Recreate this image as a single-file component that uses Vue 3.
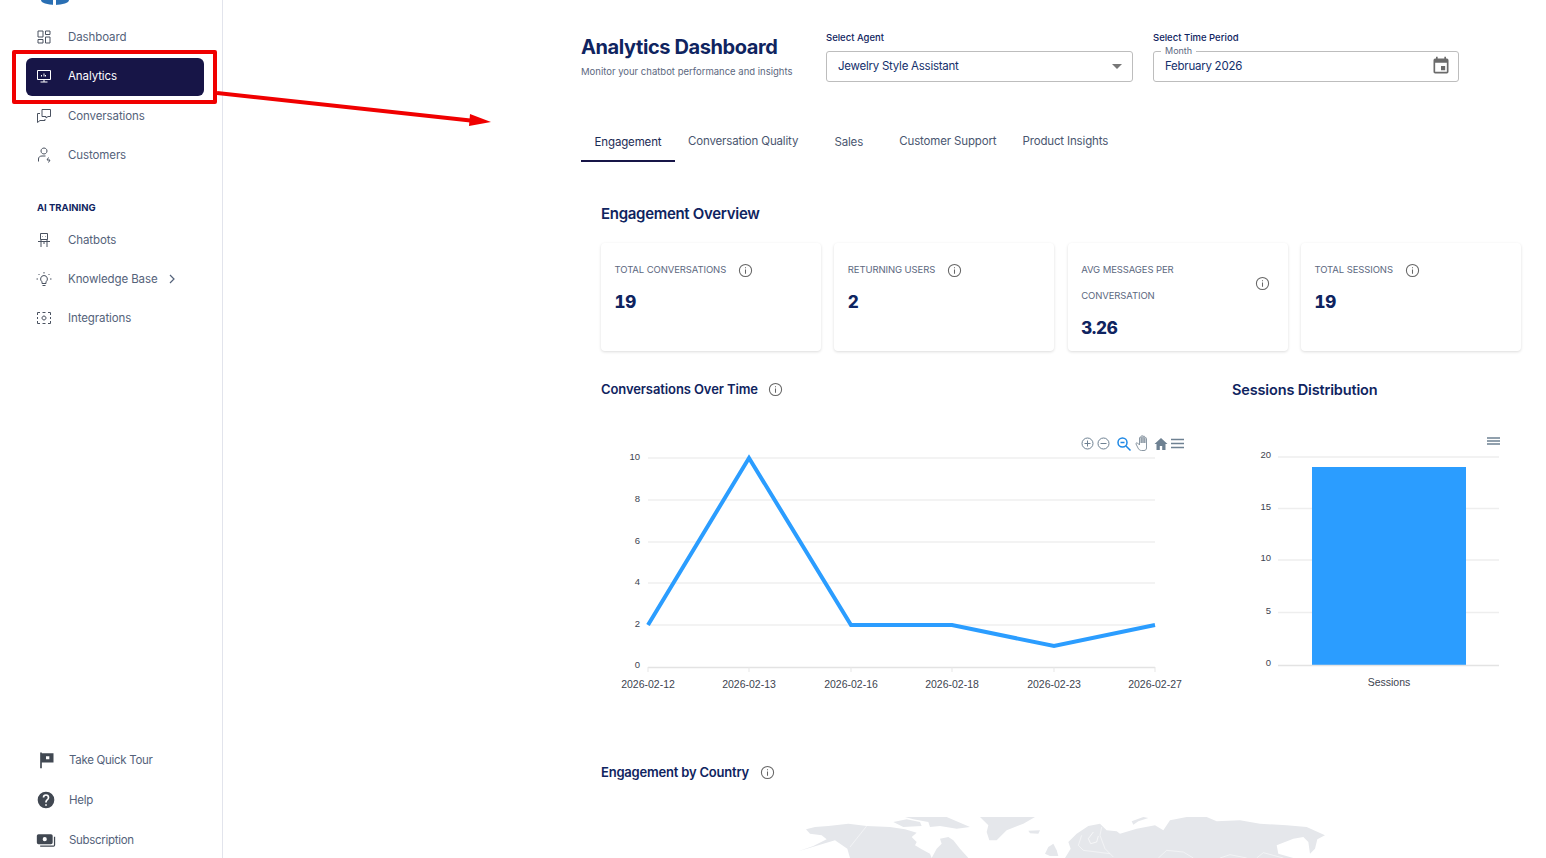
<template>
  <div class="page">
    <aside class="sidebar">
      <div class="logo"></div>
      <nav class="nav">
        <a v-for="item in mainNav" :key="item.label" class="nav-item" :class="{ active: item.active }">
          <svg class="nav-icon" viewBox="0 0 16 16" fill="none" stroke="currentColor" stroke-width="1"><path v-for="(d, i) in item.icon" :key="i" :d="d" /></svg>
          <span>{{ item.label }}</span>
        </a>
      </nav>
      <div class="nav-heading">AI TRAINING</div>
      <nav class="nav">
        <a v-for="item in trainingNav" :key="item.label" class="nav-item">
          <svg class="nav-icon" viewBox="0 0 16 16" fill="none" stroke="currentColor" stroke-width="1"><path v-for="(d, i) in item.icon" :key="i" :d="d" /></svg>
          <span>{{ item.label }}</span>
          <svg v-if="item.more" class="chev" viewBox="0 0 8 10" fill="none" stroke="currentColor" stroke-width="1.2"><path d="M2 1l4 4-4 4" /></svg>
        </a>
      </nav>
      <div class="bottom-nav">
        <a class="bottom-item">
          <svg class="bottom-icon" viewBox="0 0 24 24" fill="#414852"><path fill-rule="evenodd" d="M5 3h2v1h14v11H7v7H5zM12 7.500v3.500h4V7.500z" /></svg>
          <span>Take Quick Tour</span>
        </a>
        <a class="bottom-item">
          <svg class="bottom-icon" viewBox="0 0 24 24" fill="#414852"><path fill-rule="evenodd" d="M12 2a10 10 0 1 0 0 20 10 10 0 0 0 0-20zm1 17h-2v-2h2zm2.100-7.700-.9.900c-.8.700-1.200 1.300-1.200 2.800h-2v-.5c0-1.100.4-2.100 1.200-2.800l1.200-1.300c.4-.3.600-.8.600-1.400a2 2 0 0 0-4 0H8a4 4 0 0 1 8 0c0 .9-.4 1.700-.9 2.300z" /></svg>
          <span>Help</span>
        </a>
        <a class="bottom-item">
          <svg class="bottom-icon" viewBox="0 0 24 24" fill="#414852"><path fill-rule="evenodd" d="M3 5h15a2 2 0 0 1 2 2v8a2 2 0 0 1-2 2H3a2 2 0 0 1-2-2V7a2 2 0 0 1 2-2zm7.500 3.500a2.500 2.500 0 1 0 0 5 2.500 2.500 0 0 0 0-5z" /><path d="M21.500 8H23v10a2 2 0 0 1-2 2H5v-1.500h16.500z" /></svg>
          <span>Subscription</span>
        </a>
      </div>
    </aside>

    <main class="main">
      <header class="top">
        <div class="title-block">
          <h1>Analytics Dashboard</h1>
          <p>Monitor your chatbot performance and insights</p>
        </div>
        <div class="field">
          <label>Select Agent</label>
          <div class="input">
            <span>Jewelry Style Assistant</span>
            <i class="caret"></i>
          </div>
        </div>
        <div class="field period">
          <label>Select Time Period</label>
          <div class="input">
            <em class="legend">Month</em>
            <span>February 2026</span>
            <svg class="cal" viewBox="0 0 24 24" fill="#6b6b6b"><path d="M17 12h-5v5h5zM16 1v2H8V1H6v2H5a2 2 0 0 0-2 2v14c0 1.100.9 2 2 2h14a2 2 0 0 0 2-2V5a2 2 0 0 0-2-2h-1V1zm3 18H5V8h14z" /></svg>
          </div>
        </div>
      </header>

      <div class="tabs">
        <a v-for="tab in tabs" :key="tab" class="tab" :class="{ selected: tab === 'Engagement', sales: tab === 'Sales' }">{{ tab }}</a>
      </div>

      <section class="content">
        <h2 class="overview-title">Engagement Overview</h2>
        <div class="cards">
          <div v-for="card in cards" :key="card.label" class="card">
            <div class="card-head" :class="{ wrapped: card.wrapped }">
              <span class="card-label">{{ card.label }}</span>
              <svg class="info" viewBox="0 0 16 16" fill="none" stroke="#666" stroke-width="1.100"><circle cx="8" cy="8" r="6.500" /><path d="M8 7v4.500M8 4.500v1.200" /></svg>
            </div>
            <div class="card-value">{{ card.value }}</div>
          </div>
        </div>

        <div class="charts">
          <div class="chart-left">
            <h3 class="chart-title">
              Conversations Over Time
              <svg class="info" viewBox="0 0 16 16" fill="none" stroke="#666" stroke-width="1.100"><circle cx="8" cy="8" r="6.500" /><path d="M8 7v4.500M8 4.500v1.200" /></svg>
            </h3>
            <svg class="line-chart" viewBox="0 0 600 290" width="600" height="290">
              <g stroke="#e7e7e7" stroke-width="1">
                <path v-for="t in lineTicks" :key="t.label" :d="`M47 ${t.y}H554`" />
                <path d="M47 268.500H554" stroke="#e3e3e3" stroke-width="1.500" />
                <path v-for="x in lineXs" :key="x" :d="`M${x} 268v5`" />
              </g>
              <g class="axis-text">
                <text v-for="t in lineTicks" :key="t.label" x="39" :y="t.y + 2" text-anchor="end">{{ t.label }}</text>
                <text x="39" y="269" text-anchor="end">0</text>
                <text v-for="(x, i) in lineXs" :key="x" class="date" :x="x" y="289" text-anchor="middle">{{ dates[i] }}</text>
              </g>
              <path d="M47 226L148 59L250 226L351 226L453 247L554 226" fill="none" stroke="#2b9dff" stroke-width="4" />
              <g transform="translate(0,-10)">
                <g fill="none" stroke="#6e8192" stroke-width="1">
                  <circle cx="486.500" cy="54.500" r="5.500" /><path d="M483.500 54.500h6M486.500 51.500v6" />
                  <circle cx="502.500" cy="54.500" r="5.500" /><path d="M499.500 54.500h6" />
                </g>
                <g fill="none" stroke="#1e88e5" stroke-width="1.500">
                  <circle cx="521.500" cy="53.500" r="4.500" /><path d="M525 57l4.500 4.500M519.500 53.500h4" />
                </g>
                <path d="M535 55l2 4c.8 1.500 1.800 2.500 3.500 2.500h2.500c1.500 0 2.500-1 2.500-2.500v-9.500c0-1.200-1.700-1.200-1.700 0V54v-6c0-1.200-1.800-1.200-1.800 0v6-6.500c0-1.200-1.800-1.200-1.800 0V54v-5c0-1.200-1.700-1.200-1.700 0v7l-2-2c-.8-.8-1.700 0-1.300 1z" fill="#fff" stroke="#8a97a3" stroke-width="1" />
                <path d="M560 49l-6.500 6h2v6h3.300v-4h2.400v4h3.300v-6h2z" fill="#6e8192" />
                <path d="M570 50.500h13M570 54.500h13M570 58.500h13" stroke="#6e8192" stroke-width="1.500" fill="none" />
              </g>
            </svg>
          </div>
          <div class="chart-right">
            <h3 class="chart-title big">Sessions Distribution</h3>
            <svg class="bar-chart" viewBox="0 0 280 290" width="280" height="290">
              <g stroke="#eeeeee" stroke-width="1.500">
                <path v-for="t in barTicks" :key="t.label" :d="`M46 ${t.y}H267`" />
              </g>
              <rect x="80" y="68" width="154" height="198" fill="#2b9dff" />
              <path d="M46 266.500H267" stroke="#e3e3e3" stroke-width="1.500" />
              <g class="axis-text">
                <text v-for="t in barTicks" :key="t.label" x="39" :y="t.y + 1" text-anchor="end">{{ t.label }}</text>
                <text x="39" y="267" text-anchor="end">0</text>
                <text class="date" x="157" y="287" text-anchor="middle">Sessions</text>
              </g>
              <path d="M255 39h13M255 42h13M255 45h13" stroke="#6e8192" stroke-width="1.300" fill="none" />
            </svg>
          </div>
        </div>

        <h3 class="chart-title country">
          Engagement by Country
          <svg class="info" viewBox="0 0 16 16" fill="none" stroke="#666" stroke-width="1.100"><circle cx="8" cy="8" r="6.500" /><path d="M8 7v4.500M8 4.500v1.200" /></svg>
        </h3>
        <!-- map in 3x units, top-left of the visible part -->
        <svg class="map" viewBox="15 15 1620 123" width="540" height="41" fill="#e5e7eb">
          <path d="M25 118L70 102L110 82L95 70L60 65L48 52L75 45L115 42L175 35L230 42L300 45L345 52L380 62L365 75L380 90L375 100L395 112L420 125L425 138L440 110L455 95L450 80L475 75L490 85L510 110L535 138H180L172 110L135 85L85 100Z" />
          <path d="M310 30L350 22L390 30L395 42L340 45Z" />
          <path d="M345 15H470L540 45L500 50L450 42L420 45L415 30L370 22Z" />
          <path d="M570 15H735L700 35L650 55L620 85L598 85L590 60L595 40Z" />
          <path d="M715 56L750 55L745 65L720 64Z" />
          <path d="M765 125L775 105L790 95L800 115L805 132L780 132Z" />
          <path d="M180 105L230 42" fill="none" stroke="#fff" stroke-width="1.500" />
          <g transform="translate(810,0)">
            <path d="M15 138L32 110L25 90L50 65L85 42L120 35L140 55L170 58L180 65L230 50L285 40L310 55L330 25L380 15H440L470 28L540 25L600 35L680 40L740 45L795 70L772 82L765 110L750 125L745 90L730 75L700 80L650 100L655 125L700 138Z" />
            <path d="M215 28L250 15L265 18L235 28L220 38Z" />
            <g fill="none" stroke="#fff" stroke-width="1.500">
              <path d="M100 60L85 80L92 95L110 90L115 72" stroke-width="2" />
              <path d="M65 70L55 100L70 115M125 45L120 70L135 110L160 135M70 115L110 120L150 125" />
              <path d="M295 138L320 115L370 120L400 138M480 138L510 128L560 138M590 138L610 122L640 130L670 138" />
            </g>
          </g>
        </svg>
      </section>
    </main>

    <div class="mark-box"></div>
    <svg class="mark-arrow" viewBox="0 0 280 40" width="280" height="40">
      <path d="M0 5L258 33" stroke="#f00000" stroke-width="4" fill="none" />
      <path d="M253 26L274 34L252 38z" fill="#f00000" />
    </svg>
  </div>
</template>

<script setup>
const mainNav = [
  { label: 'Dashboard', icon: ['M2 2h5v6H2zM2 10.500h5V14H2zM9.500 2H14v3.500H9.500zM9.500 8H14v6H9.500z'] },
  { label: 'Analytics', active: true, icon: ['M1.500 2.500h13v9h-13zM8 11.500v2.500M4.500 14h7M5.500 8.500V7M8 8.500v-3M9.500 8.500V7'] },
  { label: 'Conversations', icon: ['M6 1.500h8.500v7H12l-2 1.500V8.500H6zM4 5.500H1.500V14.500L4 12.500h5v-1.500'] },
  { label: 'Customers', icon: ['M8 1a3 3 0 1 1-.01 0zM2.500 14.500v-2.500C2.500 10 4 9 6 9h3.500M12.500 10.500l-1.500 2.500h3L12.500 15.500'] }
]

const trainingNav = [
  { label: 'Chatbots', icon: ['M4.500 1.500h7v6h-7zM6.500 4.500h.5M9 4.500h.5M2 9.500h12M5 7.500V15M11 7.500V15M8 9.500V12'] },
  { label: 'Knowledge Base', more: true, icon: ['M8 4.500a3.500 3.500 0 0 0-2 6.300V12.500h4v-1.700a3.500 3.500 0 0 0-2-6.300zM6.500 14.500h3M8 1v1.500M2.500 3l1 1M13.500 3l-1 1M.5 8H2M14 8h1.500'] },
  { label: 'Integrations', icon: ['M1.500 5V2.500H4M12 2.500h2.500V5M14.500 11v2.500H12M4 13.500H1.500V11M6.500 2.500h3M6.500 13.500h3M1.500 7v2M14.500 7v2M8 6a2 2 0 1 1-.01 0z'] }
]

const tabs = ['Engagement', 'Conversation Quality', 'Sales', 'Customer Support', 'Product Insights']

const cards = [
  { label: 'TOTAL CONVERSATIONS', value: '19' },
  { label: 'RETURNING USERS', value: '2' },
  { label: 'AVG MESSAGES PER CONVERSATION', value: '3.26', wrapped: true },
  { label: 'TOTAL SESSIONS', value: '19' }
]

const lineTicks = [
  { label: '10', y: 59 },
  { label: '8', y: 101 },
  { label: '6', y: 143 },
  { label: '4', y: 184 },
  { label: '2', y: 226 }
]
const lineXs = [47, 148, 250, 351, 453, 554]
const dates = ['2026-02-12', '2026-02-13', '2026-02-16', '2026-02-18', '2026-02-23', '2026-02-27']

const barTicks = [
  { label: '20', y: 58 },
  { label: '15', y: 109.5 },
  { label: '10', y: 161 },
  { label: '5', y: 213.5 }
]
</script>

<style>
html,
body {
  margin: 0;
  height: 100%;
  overflow: hidden;
  background: #fff;
}
</style>

<style scoped>
.page {
  position: relative;
  display: flex;
  width: 1546px;
  height: 858px;
  overflow: hidden;
  font-family: Inter, "Noto Sans", sans-serif;
  color: #0f2460;
}

.sidebar {
  display: flex;
  flex-direction: column;
  flex: none;
  width: 223px;
  height: 858px;
  box-sizing: border-box;
  border-right: 1px solid #e2e4ec;
  padding: 0 18px 0 26px;
}

.logo {
  width: 28px;
  height: 5px;
  margin: 0 0 13px 15px;
  border-radius: 0 0 14px 14px / 0 0 5px 5px;
  background: linear-gradient(90deg, #2a6fb3 0 44%, #fff 44% 52%, #2a6fb3 52%);
}

.nav {
  display: flex;
  flex-direction: column;
  gap: 1.300px;
}

.nav-item {
  display: flex;
  align-items: center;
  box-sizing: border-box;
  height: 38px;
  padding-left: 10px;
  border-radius: 6px;
  font-size: 11.500px;
  letter-spacing: -0.1px;
  color: #54627a;
}

.nav-item.active {
  margin: 1px 0 -1px;
  padding-bottom: 2px;
  background: #171547;
  color: #fff;
}

.nav-icon {
  flex: none;
  width: 16px;
  height: 16px;
  margin-right: 16px;
  color: #4a5260;
}

.active .nav-icon {
  color: #fff;
}

.chev {
  width: 8px;
  height: 10px;
  margin-left: 10px;
}

.nav-heading {
  margin: 28px 0 7px 11px;
  font-size: 9.500px;
  line-height: 12px;
  font-weight: 700;
  color: #0f2460;
}

.bottom-nav {
  display: flex;
  flex-direction: column;
  gap: 18px;
  margin-top: auto;
  padding: 0 0 7.500px 10px;
}

.bottom-item {
  display: flex;
  align-items: center;
  height: 22px;
  font-size: 11.500px;
  letter-spacing: -0.3px;
  color: #54627a;
}

.bottom-icon {
  flex: none;
  width: 20px;
  height: 20px;
  margin-right: 13px;
}

.main {
  flex: 1;
  min-width: 0;
  padding: 32px 0 0 358px;
}

.top {
  display: flex;
  align-items: flex-start;
}

.title-block {
  width: 245px;
  padding-top: 2px;
}

h1 {
  margin: 0;
  font-size: 20px;
  line-height: 27px;
  font-weight: 700;
  letter-spacing: -0.4px;
}

.title-block p {
  margin: 4px 0 0;
  font-size: 9.500px;
  line-height: 14px;
  color: #5c6880;
}

.field {
  width: 307px;
  margin-right: 20px;
}

.field.period {
  width: 306px;
  margin-right: 0;
}

.field label {
  display: block;
  height: 19px;
  font-size: 9.500px;
  line-height: 12px;
  font-weight: 500;
  color: #0f2460;
}

.input {
  position: relative;
  display: flex;
  align-items: center;
  justify-content: space-between;
  box-sizing: border-box;
  height: 31px;
  padding: 0 10px 1px 11px;
  border: 1px solid #bdbdbd;
  border-radius: 3px;
  font-size: 11.500px;
  letter-spacing: -0.25px;
  color: #14306c;
}

.caret {
  width: 0;
  height: 0;
  border-left: 5px solid transparent;
  border-right: 5px solid transparent;
  border-top: 5px solid #777;
}

.legend {
  position: absolute;
  left: 7px;
  top: -7px;
  padding: 0 4px;
  background: #fff;
  font-style: normal;
  font-size: 9px;
  line-height: 11px;
  letter-spacing: 0;
  color: #5c6880;
}

.cal {
  width: 20px;
  height: 20px;
  margin-right: -3px;
}

.tabs {
  display: flex;
  margin-top: 38px;
  height: 42px;
}

.tab {
  box-sizing: border-box;
  height: 42px;
  padding: 13px 13px 0;
  font-size: 11.500px;
  line-height: 17px;
  letter-spacing: -0.15px;
  color: #4a5670;
}

.tab.selected {
  width: 94px;
  padding-top: 14px;
  border-bottom: 2px solid #171547;
  text-align: center;
  color: #1c2c55;
}

.tab.sales {
  width: 75px;
  padding-top: 14px;
  text-align: center;
}

.content {
  padding: 0 0 0 20px;
}

.overview-title {
  margin: 0;
  padding-top: 42px;
  font-size: 15px;
  line-height: 20px;
  font-weight: 600;
  letter-spacing: -0.3px;
}

.cards {
  display: grid;
  grid-template-columns: repeat(4, 220px);
  column-gap: 13.330px;
  margin-top: 19px;
}

.card {
  box-sizing: border-box;
  height: 108px;
  padding: 14px 13.500px 0;
  border-radius: 4px;
  background: #fff;
  box-shadow: 0 1px 3px rgba(0, 0, 0, 0.14);
}

.card-head {
  display: flex;
  align-items: center;
  gap: 12px;
  min-height: 26px;
}

.card-head.wrapped {
  justify-content: space-between;
  gap: 20px;
  padding-right: 4px;
}

.card-label {
  font-size: 9.500px;
  line-height: 26px;
  letter-spacing: -0.1px;
  color: #5c6880;
}

.info {
  flex: none;
  width: 15px;
  height: 15px;
}

.card-value {
  margin-top: 8px;
  font-size: 17px;
  line-height: 22px;
  font-weight: 800;
  font-variant-numeric: tabular-nums;
  letter-spacing: -0.3px;
  color: #0f2460;
}

.charts {
  display: flex;
  margin-top: 28px;
}

.chart-left {
  width: 631px;
}

.chart-title {
  display: flex;
  align-items: center;
  gap: 10px;
  margin: 0;
  height: 20px;
  font-size: 13px;
  font-weight: 600;
  letter-spacing: -0.1px;
}

.chart-title.big {
  font-size: 14.500px;
  letter-spacing: -0.15px;
}

.line-chart,
.bar-chart {
  display: block;
  overflow: visible;
}

.axis-text {
  font-family: "Liberation Sans", Arial, sans-serif;
  font-size: 9.500px;
  fill: #3d4450;
}

.axis-text .date {
  font-size: 10.500px;
}

.chart-title.country {
  margin-top: 73px;
  gap: 11px;
  letter-spacing: -0.2px;
}

.map {
  display: block;
  margin: 35px 0 0 194px;
  overflow: visible;
}

.mark-box {
  position: absolute;
  left: 12px;
  top: 50px;
  width: 197px;
  height: 46px;
  border: 4px solid #f00000;
  border-radius: 2px;
}

.mark-arrow {
  position: absolute;
  left: 217px;
  top: 88px;
}
</style>
